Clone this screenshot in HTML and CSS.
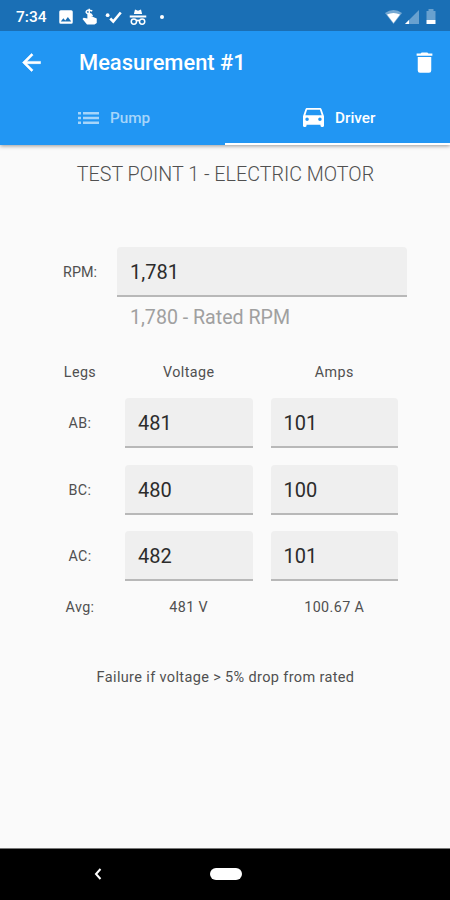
FILE: index.html
```html
<!DOCTYPE html>
<html lang="en">
<head>
    <meta charset="UTF-8">
    <meta name="viewport" content="width=device-width, initial-scale=1.0">
    <title>Measurement #1</title>
    <link rel="stylesheet" href="styles.css">
</head>
<body>
    <div class="screen">
        <header class="header">
            <div class="status">
                <span class="time">7:34</span>
                <div class="notifications">
                    <svg width="18" height="18" viewBox="0 0 24 24"><path d="M21 19V5a2 2 0 0 0-2-2H5a2 2 0 0 0-2 2v14a2 2 0 0 0 2 2h14a2 2 0 0 0 2-2zM8.5 13.5l2.5 3 3.5-4.500 4.500 6H5z"/></svg>
                    <svg width="18" height="18" viewBox="0 0 24 24"><path d="M8.500 7v7l-5-1L2 14.500 8 22h10l3-2v-6l-7-3V7z"/><path class="line" d="M15 4c-4-2-9-1-8 2s8 1 8 5M11 1v9"/></svg>
                    <svg width="18" height="18" viewBox="0 0 24 24"><path class="line thick" d="M7 14l4 4L21 6"/><circle cx="3.500" cy="9.500" r="2.500"/></svg>
                    <svg width="18" height="18" viewBox="0 0 24 24"><path d="M6.500 8L8 2l4 1.500L16 2l1.500 6zM1 10h22v2.500H1z"/><g class="line"><circle cx="6.500" cy="18" r="3.500"/><circle cx="17.500" cy="18" r="3.500"/><path d="M10 17q2-1 4 0"/></g></svg>
                    <i class="dot"></i>
                </div>
                <div class="signals">
                    <svg width="17" height="16" viewBox="0 0 17 16"><path opacity=".4" d="M0 4q8.500-6 17 0L8.500 15z"/><path d="M2 5.500q6.500-3 13 0L8.500 14z"/></svg>
                    <svg width="15" height="16" viewBox="0 0 15 16"><path opacity=".35" d="M15 1v14H1z"/><path d="M5 11v4H1z"/></svg>
                    <svg width="10" height="16" viewBox="0 0 10 16"><path opacity=".35" d="M.5 2h2V0h5v2h2v9h-9z"/><path d="M.5 11h9v4h-9z"/></svg>
                </div>
            </div>
            <div class="toolbar">
                <svg class="back" width="27" height="27" viewBox="0 0 24 24"><path stroke="currentColor" stroke-width=".5" d="M20 11H7.830l5.590-5.590L12 4l-8 8 8 8 1.410-1.410L7.830 13H20z"/></svg>
                <h1 class="title">Measurement #1</h1>
                <svg width="27" height="27" viewBox="0 0 24 24"><path d="M6 19a2 2 0 0 0 2 2h8a2 2 0 0 0 2-2V7H6zM19 4h-3.500l-1-1h-5l-1 1H5v2h14z"/></svg>
            </div>
            <nav class="tabs">
                <div class="tab">
                    <svg width="21" height="14" viewBox="0 0 21 14"><path d="M0 1h3v2.500H0zM5 1h16v2.500H5zM0 5.750h3v2.500H0zM5 5.750h16v2.500H5zM0 10.500h3V13H0zM5 10.500h16V13H5z"/></svg>
                    <span>Pump</span>
                </div>
                <div class="tab active">
                    <svg width="21" height="19" viewBox="3 5 18 16" preserveAspectRatio="none"><path d="M18.920 6.010C18.720 5.420 18.160 5 17.500 5h-11c-.66 0-1.210.42-1.420 1.010L3 12v8c0 .55.45 1 1 1h1c.55 0 1-.45 1-1v-1h12v1c0 .55.45 1 1 1h1c.55 0 1-.45 1-1v-8zM6.500 16a1.500 1.500 0 1 1 0-3 1.500 1.500 0 0 1 0 3zm11 0a1.500 1.500 0 1 1 0-3 1.500 1.500 0 0 1 0 3zM5 11l1.500-4.500h11L19 11z"/></svg>
                    <span>Driver</span>
                </div>
            </nav>
        </header>

        <main class="content">
            <h2 class="heading">TEST POINT 1 - ELECTRIC MOTOR</h2>

            <div class="rpm">
                <div class="label">RPM:</div>
                <div class="field">1,781</div>
                <div class="helper">1,780 - Rated RPM</div>
            </div>

            <div class="legs">
                <div class="label">Legs</div>
                <div class="label">Voltage</div>
                <div class="label">Amps</div>

                <div class="label">AB:</div>
                <div class="field">481</div>
                <div class="field">101</div>

                <div class="label">BC:</div>
                <div class="field">480</div>
                <div class="field">100</div>

                <div class="label">AC:</div>
                <div class="field">482</div>
                <div class="field">101</div>

                <div class="label">Avg:</div>
                <div class="label">481 V</div>
                <div class="label">100.67 A</div>
            </div>

            <p class="note">Failure if voltage &gt; 5% drop from rated</p>
        </main>

        <footer class="navbar">
            <svg width="8" height="12" viewBox="0 0 8 12"><path class="line" d="M6.500 1L2 6l4.500 5"/></svg>
            <i class="home"></i>
        </footer>
    </div>
</body>
</html>
```
FILE: styles.css
```css
* {
    box-sizing: border-box;
}

body {
    margin: 0;
    font-family: Roboto, "Liberation Sans", sans-serif;
    color: #505050;
}

svg {
    display: block;
    flex: none;
    fill: currentColor;
}

.line {
    fill: none;
    stroke: currentColor;
    stroke-width: 2;
}

.thick {
    stroke-width: 3.5;
}

.screen {
    display: flex;
    flex-direction: column;
    height: 900px;
    background: #fafafa;
}

/* Header */
.header {
    height: 145px;
    background: #2196f3;
    color: #fff;
    box-shadow: 0 1px 4px rgba(0, 0, 0, .4);
}

.status {
    display: flex;
    align-items: center;
    height: 31px;
    padding: 2px 14px 0 16px;
    background: #1a6fb5;
}

.time {
    width: 41px;
    font-size: 15.5px;
    font-weight: 500;
}

.notifications {
    display: flex;
    align-items: center;
    gap: 6px;
}

.dot {
    width: 4px;
    height: 4px;
    margin-left: 7px;
    border-radius: 50%;
    background: #fff;
}

.signals {
    display: flex;
    gap: 2px;
    margin-left: auto;
}

.signals svg:last-child {
    margin-left: 5px;
}

.toolbar {
    display: flex;
    align-items: center;
    height: 62px;
    padding: 0 12px 0 18px;
}

.title {
    flex: 1;
    margin: 0 0 0 34px;
    font-size: 21.9px;
    font-weight: 500;
}

.tabs {
    display: flex;
    height: 52px;
}

.tab {
    display: flex;
    flex: 1;
    align-items: center;
    gap: 11px;
    padding: 0 0 1px 78px;
    border-bottom: 2px solid transparent;
    font-size: 15.3px;
    font-weight: 500;
    color: #a6d5fa;
}

.active {
    border-color: #fff;
    color: #fff;
}

/* Measurement form */
.content {
    flex: 1;
    padding: 0 43px 0 44px;
}

.heading {
    margin: 17px 0 0;
    font-size: 19.7px;
    font-weight: 300;
    line-height: 26px;
    text-align: center;
    white-space: nowrap;
}

.label {
    font-size: 14.3px;
    letter-spacing: .4px;
    text-align: center;
}

.field {
    height: 50px;
    padding-left: 13px;
    border-bottom: 2px solid #b8b8b8;
    border-radius: 4px 4px 0 0;
    background: #efefef;
    font-size: 20px;
    line-height: 50px;
    color: #2c2c2c;
}

.rpm {
    display: grid;
    grid-template-columns: 73px 1fr;
    align-items: center;
    margin-top: 59px;
}

.helper {
    grid-column: 2;
    padding: 1px 0 0 13px;
    font-size: 19.6px;
    line-height: 40px;
    color: #a0a0a0;
}

.rpm .label {
    padding-right: 1px;
    letter-spacing: 0;
}

.legs {
    display: grid;
    grid-template-columns: 72px 1fr 1fr;
    grid-template-rows: 35px repeat(3, 66.7px) 34px;
    align-items: center;
    margin-top: 16.6px;
}

.legs .field {
    margin: 0 9px;
}

.note {
    margin: 44.4px 0 0;
    font-size: 14.5px;
    letter-spacing: .36px;
    line-height: 20px;
    text-align: center;
}

/* System navigation */
.navbar {
    display: flex;
    align-items: center;
    height: 52px;
    padding: 0 0 2px 94px;
    border-top: 1px solid #777;
    background: #000;
    color: #fff;
}

.home {
    width: 32px;
    height: 12px;
    margin-left: 108px;
    border-radius: 6px;
    background: #fff;
}
```
